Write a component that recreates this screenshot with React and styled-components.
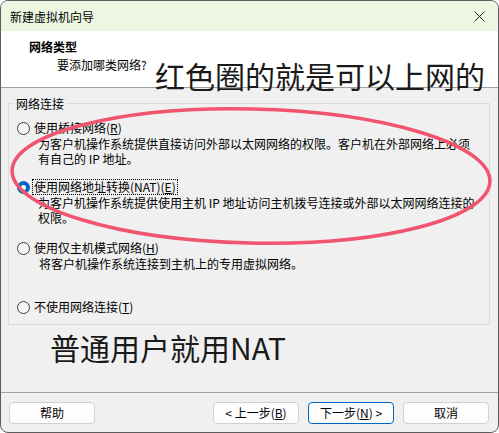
import React from "react";
import styled, { createGlobalStyle } from "styled-components";

const Global = createGlobalStyle`
  * { box-sizing: border-box; }
  html, body { margin: 0; padding: 0; background: #ffffff; }
  body { font-family: "Noto Sans CJK SC", "Noto Sans", sans-serif; }
`;

const Window = styled.div`
  position: relative;
  width: 499px;
  height: 433px;
  border: 1px solid #5c5c5c;
  border-radius: 8px;
  overflow: hidden;
  background: #f0f0f0;
  display: flex;
  flex-direction: column;
  font-size: 12px;
  color: #000;
`;

const TitleBar = styled.div`
  height: 30px;
  flex: none;
  background: #edf6e2;
  display: flex;
  align-items: center;
  justify-content: space-between;
  padding: 0 9px 0 9px;
  font-size: 12px;
`;

const CloseBtn = styled.div`
  width: 24px;
  height: 20px;
  display: flex;
  align-items: center;
  justify-content: center;
  margin-right: -2px;
`;

const Header = styled.div`
  height: 57px;
  flex: none;
  background: #ffffff;
  border-bottom: 1px solid #a0a0a0;
  display: flex;
  flex-direction: column;
  padding: 8px 0 0 28px;
`;

const HeaderTitle = styled.div`
  font-weight: bold;
  line-height: 16px;
  font-size: 12px;
`;

const HeaderSub = styled.div`
  line-height: 16px;
  margin-top: 2px;
  padding-left: 28px;
`;

const Body = styled.div`
  flex: 1;
  display: flex;
  flex-direction: column;
  padding: 8px 8px 0 7px;
`;

const Group = styled.fieldset`
  margin: 0;
  border: 1px solid #dcdcdc;
  padding: 9px 0 9px 8px;
  min-width: 0;
`;

const Legend = styled.legend`
  padding: 0 2px;
  margin-left: -3px;
  line-height: 15px;
`;

const Option = styled.div`
  display: flex;
  flex-direction: column;
  margin-top: ${(p) => p.$gap || 0}px;
`;

const RadioRow = styled.div`
  height: 16px;
  display: flex;
  align-items: center;
  gap: 3px;
`;

const Radio = styled.span`
  width: 13px;
  height: 13px;
  border-radius: 50%;
  flex: none;
  display: flex;
  align-items: center;
  justify-content: center;
  border: 1px solid ${(p) => (p.$checked ? "#0067c0" : "#3f3f3f")};
  background: ${(p) => (p.$checked ? "#0067c0" : "#f7f7f7")};
  &::after {
    content: "";
    display: ${(p) => (p.$checked ? "block" : "none")};
    width: 5px;
    height: 5px;
    border-radius: 50%;
    background: #ffffff;
  }
`;

const Label = styled.span`
  line-height: 14px;
  padding: 0 1px;
  border: 1px dotted ${(p) => (p.$focus ? "#000" : "transparent")};
  margin-left: -1px;
`;

const Key = styled.u`
  text-underline-offset: 1px;
`;

const Desc = styled.div`
  padding-left: ${(p) => p.$indent || 21}px;
  line-height: 15px;
  white-space: nowrap;
`;

const Note = styled.div`
  margin-top: 4px;
  padding-left: 42px;
  font-size: 30px;
  line-height: 36px;
  color: #1a1a1a;
`;

const Footer = styled.div`
  flex: none;
  height: 40px;
  border-top: 1px solid #a0a0a0;
  display: flex;
  align-items: flex-start;
  padding: 9px 8px 0 8px;
  gap: 9px;
`;

const Button = styled.div`
  width: 86px;
  height: 22px;
  border-radius: 4px;
  background: #fdfdfd;
  border: 1px solid ${(p) => (p.$primary ? "#0067c0" : "#d0d0d0")};
  display: flex;
  align-items: center;
  justify-content: center;
  line-height: 14px;
  margin-right: ${(p) => p.$push || 0}px;
`;

const Annotation = styled.div`
  position: absolute;
  left: 154px;
  top: 58px;
  font-size: 30px;
  line-height: 32px;
  color: #1a1a1a;
  white-space: nowrap;
`;

const Circle = styled.svg`
  position: absolute;
  left: 0;
  top: 0;
  pointer-events: none;
`;

export default function App() {
  return (
    <>
      <Global />
      <Window>
        <TitleBar>
          <span>新建虚拟机向导</span>
          <CloseBtn>
            <svg width="11" height="11" viewBox="0 0 11 11">
              <path d="M0.5 0.5 L10.5 10.5 M10.5 0.5 L0.5 10.5" stroke="#222" strokeWidth="1" />
            </svg>
          </CloseBtn>
        </TitleBar>
        <Header>
          <HeaderTitle>网络类型</HeaderTitle>
          <HeaderSub>要添加哪类网络?</HeaderSub>
        </Header>
        <Body>
          <Group>
            <Legend>网络连接</Legend>
            <Option>
              <RadioRow>
                <Radio />
                <Label>使用桥接网络(<Key>R</Key>)</Label>
              </RadioRow>
              <Desc>为客户机操作系统提供直接访问外部以太网网络的权限。客户机在外部网络上必须</Desc>
              <Desc>有自己的 IP 地址。</Desc>
            </Option>
            <Option $gap={13}>
              <RadioRow>
                <Radio $checked />
                <Label $focus>使用网络地址转换(NAT)(<Key>E</Key>)</Label>
              </RadioRow>
              <Desc>为客户机操作系统提供使用主机 IP 地址访问主机拨号连接或外部以太网网络连接的</Desc>
              <Desc>权限。</Desc>
            </Option>
            <Option $gap={15}>
              <RadioRow>
                <Radio />
                <Label>使用仅主机模式网络(<Key>H</Key>)</Label>
              </RadioRow>
              <Desc $indent={22}>将客户机操作系统连接到主机上的专用虚拟网络。</Desc>
            </Option>
            <Option $gap={28}>
              <RadioRow>
                <Radio />
                <Label>不使用网络连接(<Key>T</Key>)</Label>
              </RadioRow>
            </Option>
          </Group>
          <Note>普通用户就用NAT</Note>
        </Body>
        <Footer>
          <Button $push={109}>帮助</Button>
          <Button>&lt; 上一步(<Key>B</Key>)</Button>
          <Button $primary>下一步(<Key>N</Key>) &gt;</Button>
          <Button>取消</Button>
        </Footer>
        <Annotation>红色圈的就是可以上网的</Annotation>
        <Circle width="499" height="433" viewBox="0 0 499 433">
          <ellipse
            cx="250"
            cy="175"
            rx="239"
            ry="67"
            transform="rotate(1.3 250 175)"
            fill="none"
            stroke="#f0546f"
            strokeWidth="3.5"
          />
        </Circle>
      </Window>
    </>
  );
}
